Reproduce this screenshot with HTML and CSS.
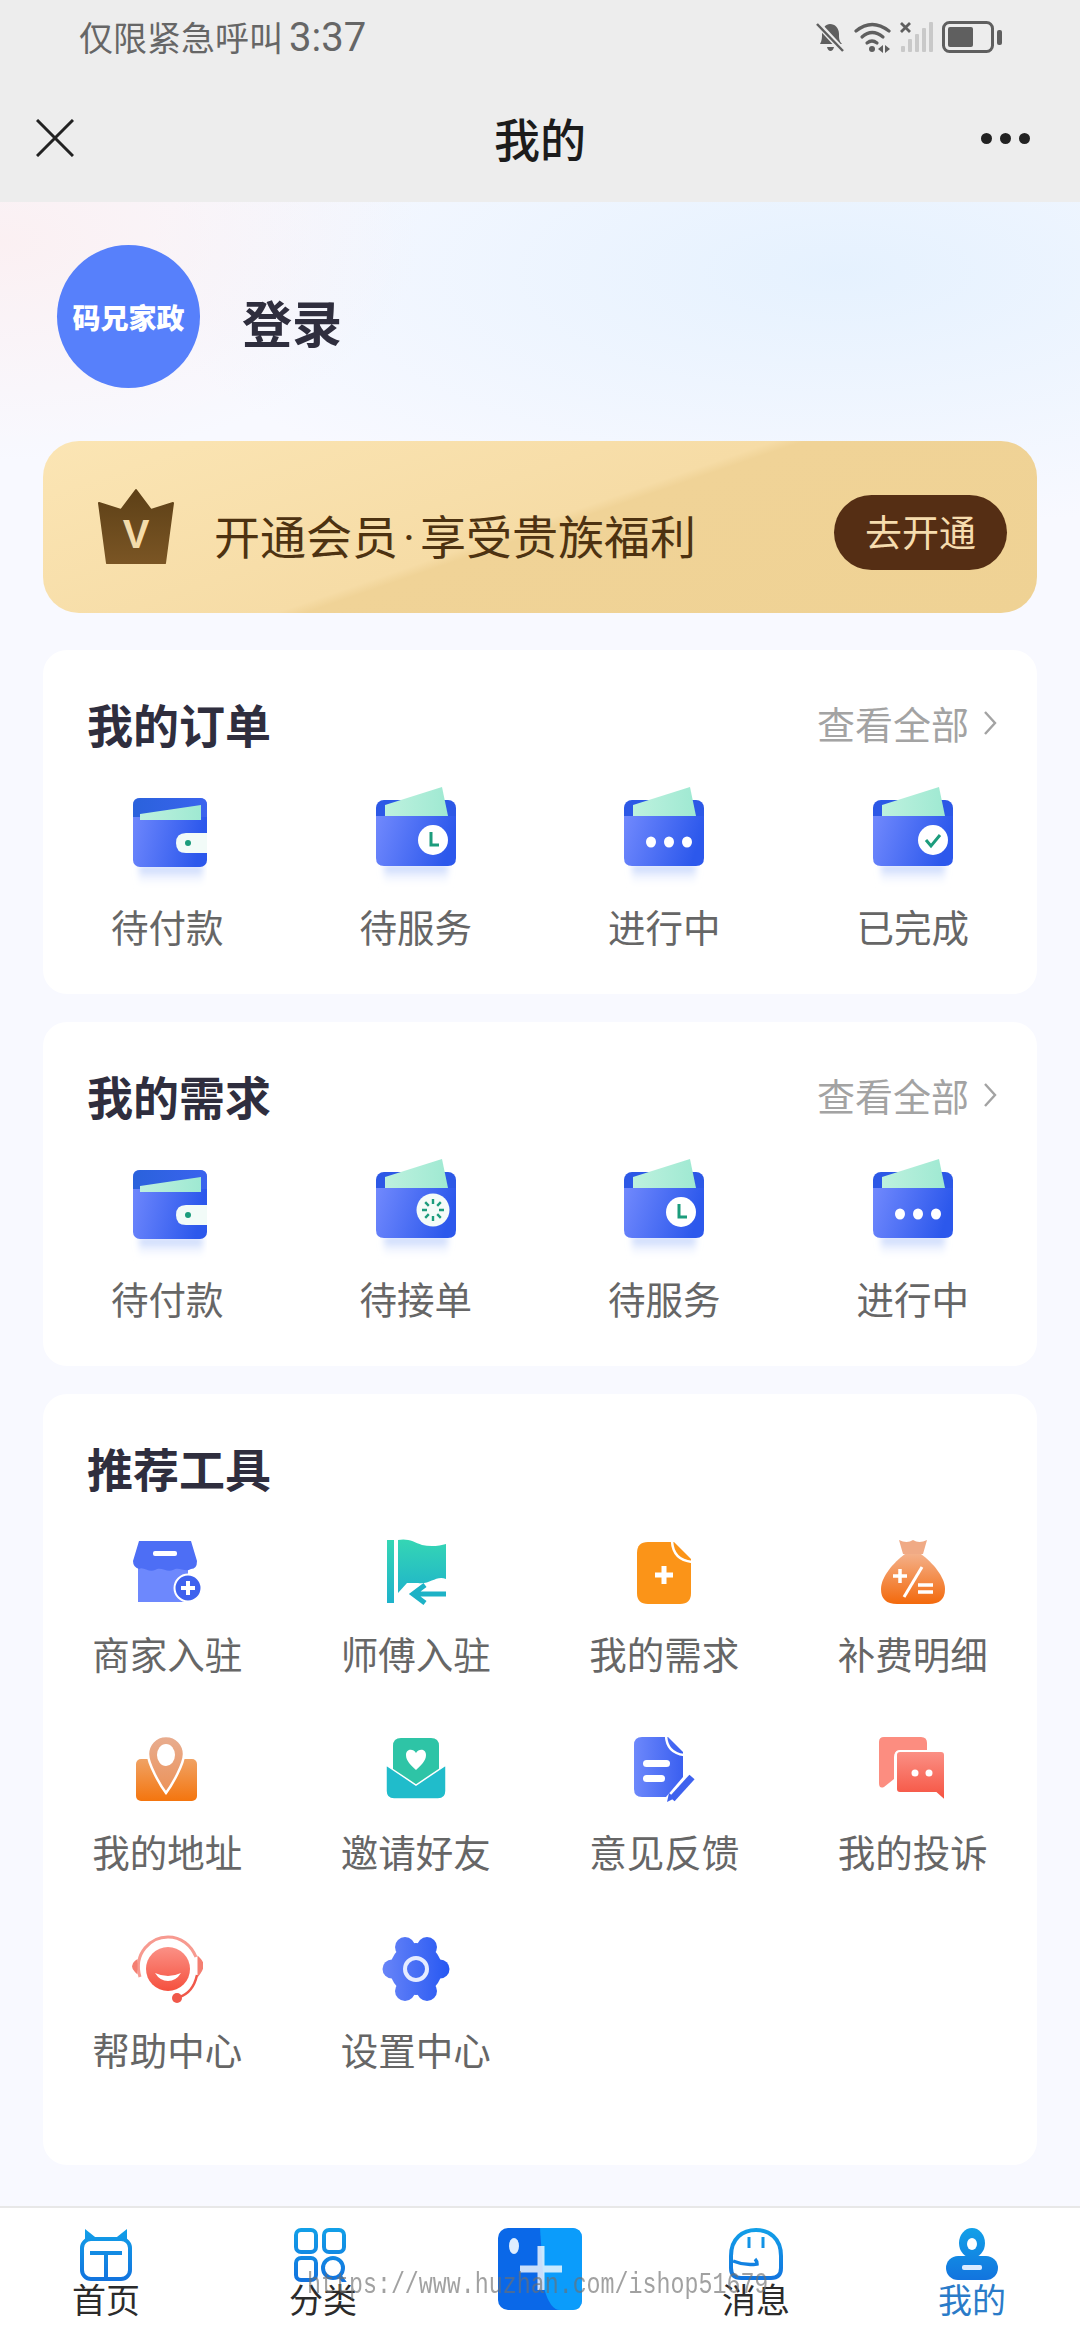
FILE: index.html
```html
<!DOCTYPE html>
<html lang="zh">
<head>
    <meta charset="utf-8">
    <title>我的</title>
    <link rel="stylesheet" href="styles.css">
</head>
<body>
    <!-- shared gradients and icons -->
    <svg class="sprite" xmlns="http://www.w3.org/2000/svg">
        <defs>
            <filter id="soft" x="-20%" y="-20%" width="140%" height="140%"><feGaussianBlur stdDeviation="3"/></filter>
            <linearGradient id="walletBody" x1="0" y1="0" x2="1" y2="0.2"><stop offset="0" stop-color="#7189fd"/><stop offset="1" stop-color="#2c58ec"/></linearGradient>
            <linearGradient id="walletTop" x1="0" y1="0" x2="1" y2="0"><stop offset="0" stop-color="#2a62dc"/><stop offset="1" stop-color="#3a63ee"/></linearGradient>
            <linearGradient id="mint" x1="0" y1="0" x2="1" y2="0"><stop offset="0" stop-color="#bdf1de"/><stop offset="1" stop-color="#9fe9d2"/></linearGradient>
            <linearGradient id="fade" x1="0" y1="0" x2="0" y2="1"><stop offset="0" stop-color="#b9cdfb"/><stop offset="1" stop-color="#ffffff" stop-opacity="0"/></linearGradient>
            <linearGradient id="blueSide" x1="0" y1="0" x2="1" y2="0"><stop offset="0" stop-color="#6d88fb"/><stop offset="1" stop-color="#3a5ff0"/></linearGradient>
            <linearGradient id="gearBlue" gradientUnits="userSpaceOnUse" x1="0" y1="0" x2="72" y2="0"><stop offset="0" stop-color="#6a86f8"/><stop offset="1" stop-color="#2456f2"/></linearGradient>
            <linearGradient id="teal" x1="0" y1="0" x2="0" y2="1"><stop offset="0" stop-color="#35d6b4"/><stop offset="1" stop-color="#1eb2cb"/></linearGradient>
            <linearGradient id="orange" x1="0" y1="0" x2="0" y2="1"><stop offset="0" stop-color="#f4b089"/><stop offset="1" stop-color="#f3690c"/></linearGradient>
            <linearGradient id="orangeBody" x1="0" y1="0" x2="0" y2="1"><stop offset="0" stop-color="#f0a264"/><stop offset="1" stop-color="#f4750e"/></linearGradient>
            <linearGradient id="peach" x1="0" y1="0" x2="0" y2="1"><stop offset="0" stop-color="#e8ad90"/><stop offset="1" stop-color="#ec9258"/></linearGradient>
            <linearGradient id="salmon" x1="0" y1="0" x2="0" y2="1"><stop offset="0" stop-color="#fb9186"/><stop offset="1" stop-color="#f5503e"/></linearGradient>
            <linearGradient id="navBlue" gradientUnits="userSpaceOnUse" x1="0" y1="0" x2="0" y2="54"><stop offset="0" stop-color="#12a0e8"/><stop offset="1" stop-color="#1272de"/></linearGradient>
            <linearGradient id="crown" x1="0" y1="0" x2="0" y2="1"><stop offset="0" stop-color="#5d4017"/><stop offset="1" stop-color="#7a5524"/></linearGradient>

            <symbol id="w-base" viewBox="0 0 80 105">
                <rect x="8" y="78" width="64" height="22" fill="url(#fade)" filter="url(#soft)"/>
                <rect x="0" y="13" width="80" height="60" rx="8" fill="#2c58e6"/>
                <path d="M9 18 L66 0 L72 29 L9 29 Z" fill="url(#mint)"/>
                <path d="M0 29 H80 V71 Q80 79 72 79 H8 Q0 79 0 71 Z" fill="url(#walletBody)"/>
            </symbol>
            <symbol id="w-flap" viewBox="-3 0 80 105">
                <rect x="9" y="79" width="64" height="22" fill="url(#fade)" filter="url(#soft)"/>
                <rect x="3" y="11" width="74" height="69" rx="7" fill="url(#walletBody)"/>
                <path d="M3 18 Q3 11 10 11 H70 Q77 11 77 18 V30 H3 Z" fill="url(#walletTop)"/>
                <path d="M10 27 L71 18 V33 H10 Z" fill="url(#mint)"/>
                <path d="M56 46 H77 V66 H56 Q46 66 46 56 Q46 46 56 46 Z" fill="#f2fbf8"/>
                <circle cx="58" cy="56" r="3" fill="#1c9c7c"/>
            </symbol>
            <symbol id="w-clock" viewBox="0 0 80 105">
                <use href="#w-base" width="80" height="105"/>
                <circle cx="57" cy="53" r="15" fill="#fff"/>
                <path d="M55 45 V58 H63" fill="none" stroke="#1c9c7c" stroke-width="3"/>
            </symbol>
            <symbol id="w-dots" viewBox="0 0 80 105">
                <use href="#w-base" width="80" height="105"/>
                <ellipse cx="27" cy="55" rx="5" ry="5.5" fill="#fff"/>
                <ellipse cx="45" cy="55" rx="5" ry="5.5" fill="#fff"/>
                <ellipse cx="63" cy="55" rx="5" ry="5.5" fill="#fff"/>
            </symbol>
            <symbol id="w-check" viewBox="0 0 80 105">
                <use href="#w-base" width="80" height="105"/>
                <circle cx="60" cy="53" r="15" fill="#fff"/>
                <path d="M53 53 L58 59 L67 48" fill="none" stroke="#1c9c7c" stroke-width="3"/>
            </symbol>
            <symbol id="w-spin" viewBox="0 0 80 105">
                <use href="#w-base" width="80" height="105"/>
                <circle cx="57" cy="51" r="16.5" fill="#f4fbf8"/>
                <path d="M57 40 V45 M57 57 V62 M46 51 H51 M63 51 H68 M49.2 43.2 L52.8 46.8 M61.2 55.2 L64.8 58.8 M64.8 43.2 L61.2 46.8 M52.8 55.2 L49.2 58.8" stroke="#1c9c7c" stroke-width="2.4"/>
            </symbol>
        </defs>
    </svg>

    <div class="phone">
        <header class="topbar">
            <div class="statusbar">
                <span class="status-text">仅限紧急呼叫<span class="status-time">3:37</span></span>
                <div class="status-icons">
                    <svg width="30" height="32" viewBox="0 0 30 32"><path d="M5 23 C7 20 7 16 7 13 C7 7 11 3 15 3 C20 3 24 7 24 13 C24 17 24 20 27 23 Z" fill="#5f5f5f"/><path d="M12 26 H19 Q18 30 15.5 30 Q13 30 12 26 Z" fill="#5f5f5f"/><path d="M3 3 L28 30" stroke="#ededed" stroke-width="6"/><path d="M2 3 L28 30" stroke="#5f5f5f" stroke-width="2.5"/></svg>
                    <svg width="37" height="32" viewBox="0 0 37 32"><g fill="none" stroke="#5f5f5f" stroke-width="3.2" stroke-linecap="round"><path d="M2 10 Q18 -3 35 10"/><path d="M8 16 Q18 7 29 16"/><path d="M13 22 Q18 18 23 22"/></g><circle cx="18" cy="28" r="3" fill="#5f5f5f"/><path d="M29 24 V32 L24 28 Z M31 24 V32 L36 28 Z" fill="#5f5f5f"/></svg>
                    <svg width="33" height="32" viewBox="0 0 33 32"><path d="M1 2 L10 11 M10 2 L1 11" stroke="#5f5f5f" stroke-width="2.8"/><g fill="#c9c9c9"><rect x="1" y="25" width="4" height="6" rx="1"/><rect x="8" y="18" width="4" height="13" rx="1"/><rect x="15" y="13" width="4" height="18" rx="1"/><rect x="22" y="7" width="4" height="24" rx="1"/><rect x="29" y="1" width="4" height="30" rx="1"/></g></svg>
                    <svg width="60" height="32" viewBox="0 0 60 32"><rect x="1.5" y="1.5" width="49" height="29" rx="6" fill="none" stroke="#5f5f5f" stroke-width="3"/><rect x="6" y="6" width="25" height="20" rx="2" fill="#5f5f5f"/><rect x="55" y="9" width="5" height="15" rx="2" fill="#5f5f5f"/></svg>
                </div>
            </div>
            <div class="navbar">
                <svg class="nav-close" width="38" height="38" viewBox="0 0 38 38"><path d="M1 1 L37 37 M37 1 L1 37" stroke="#222" stroke-width="3"/></svg>
                <h1 class="nav-title">我的</h1>
                <div class="nav-more"><i></i><i></i><i></i></div>
            </div>
        </header>

        <main class="content">
            <section class="profile">
                <div class="avatar">码兄家政</div>
                <div class="login">登录</div>
            </section>

            <section class="vip">
                <svg class="vip-crown" width="78" height="78" viewBox="0 0 78 78">
                    <path d="M39 2 L54 22 L76 15 L68 75 H10 L2 15 L24 22 Z" fill="url(#crown)" stroke="url(#crown)" stroke-width="2" stroke-linejoin="round"/>
                    <text x="39" y="60" text-anchor="middle" class="vip-v">V</text>
                </svg>
                <div class="vip-text">开通会员<span class="vip-dot">·</span>享受贵族福利</div>
                <div class="vip-btn">去开通</div>
            </section>

            <section class="card">
                <div class="card-head">
                    <h2 class="card-title">我的订单</h2>
                    <div class="card-more">查看全部<svg width="14" height="26" viewBox="0 0 14 26"><path d="M2 2 L12 13 L2 24" fill="none" stroke="#a3a3a3" stroke-width="2.4"/></svg></div>
                </div>
                <div class="grid-row">
                    <div class="cell"><svg class="wallet"><use href="#w-flap"/></svg><span class="cell-label">待付款</span></div>
                    <div class="cell"><svg class="wallet"><use href="#w-clock"/></svg><span class="cell-label">待服务</span></div>
                    <div class="cell"><svg class="wallet"><use href="#w-dots"/></svg><span class="cell-label">进行中</span></div>
                    <div class="cell"><svg class="wallet"><use href="#w-check"/></svg><span class="cell-label">已完成</span></div>
                </div>
            </section>

            <section class="card">
                <div class="card-head">
                    <h2 class="card-title">我的需求</h2>
                    <div class="card-more">查看全部<svg width="14" height="26" viewBox="0 0 14 26"><path d="M2 2 L12 13 L2 24" fill="none" stroke="#a3a3a3" stroke-width="2.4"/></svg></div>
                </div>
                <div class="grid-row">
                    <div class="cell"><svg class="wallet"><use href="#w-flap"/></svg><span class="cell-label">待付款</span></div>
                    <div class="cell"><svg class="wallet"><use href="#w-spin"/></svg><span class="cell-label">待接单</span></div>
                    <div class="cell"><svg class="wallet"><use href="#w-clock"/></svg><span class="cell-label">待服务</span></div>
                    <div class="cell"><svg class="wallet"><use href="#w-dots"/></svg><span class="cell-label">进行中</span></div>
                </div>
            </section>

            <section class="card card-tools">
                <div class="card-head">
                    <h2 class="card-title">推荐工具</h2>
                </div>
                <div class="grid-row tools">
                    <div class="cell tool">
                        <svg width="72" height="72" viewBox="0 0 72 72">
                            <rect x="7" y="28" width="50" height="37" fill="#6d88fd"/>
                            <path d="M8 4 H60 L66 24 Q66 32 60 32 C54 36 48 29 42 33 C36 36 30 29 24 33 C18 36 12 29 8 32 Q2 30 2 24 Z" fill="#4d6ef5"/>
                            <rect x="22" y="14" width="24" height="5" rx="2" fill="#fff"/>
                            <circle cx="57" cy="51" r="13.5" fill="#3f62ee" stroke="#fff" stroke-width="2"/>
                            <path d="M57 44 V58 M50 51 H64" stroke="#fff" stroke-width="4"/>
                        </svg>
                        <span class="cell-label">商家入驻</span>
                    </div>
                    <div class="cell tool">
                        <svg width="72" height="72" viewBox="0 0 72 72">
                            <rect x="7" y="3" width="7" height="63" fill="url(#teal)"/>
                            <path d="M18 3 C28 1 34 5 42 8 C50 10 60 9 66 7 V42 C56 38 50 48 38 46 L27 46 L18 56 V60 Z" fill="url(#teal)"/>
                            <path d="M66 57 H36 M45 48 L33 57 L45 66" fill="none" stroke="#1db2c6" stroke-width="5"/>
                        </svg>
                        <span class="cell-label">师傅入驻</span>
                    </div>
                    <div class="cell tool">
                        <svg width="72" height="72" viewBox="0 0 72 72">
                            <path d="M20 5 H46 L63 22 V56 Q63 67 52 67 H20 Q9 67 9 56 V16 Q9 5 20 5 Z" fill="#fb9418"/>
                            <path d="M44 4 Q45 23 64 25" fill="none" stroke="#fff" stroke-width="2.5"/>
                            <path d="M36 29 V47 M27 38 H45" stroke="#fff" stroke-width="5"/>
                        </svg>
                        <span class="cell-label">我的需求</span>
                    </div>
                    <div class="cell tool">
                        <svg width="72" height="72" viewBox="0 0 72 72">
                            <path d="M22 3 Q30 7 36 3 Q42 7 50 3 L46 17 H26 Z" fill="#f0aa85"/>
                            <path d="M28 17 H44 C56 26 68 40 68 52 Q68 67 52 67 H20 Q4 67 4 52 C4 40 16 26 28 17 Z" fill="url(#orange)"/>
                            <path d="M45 30 L27 60" stroke="#fff" stroke-width="3"/>
                            <path d="M23 32 V46 M16 39 H30 M41 48 H56 M41 55 H56" stroke="#fff" stroke-width="3.5"/>
                        </svg>
                        <span class="cell-label">补费明细</span>
                    </div>
                    <div class="cell tool">
                        <svg width="72" height="72" viewBox="0 0 72 72">
                            <rect x="5" y="24" width="61" height="42" rx="5" fill="url(#orangeBody)"/>
                            <path d="M35 1 C46 1 53 10 53 19 C53 29 41 50 35 58 C29 50 17 29 17 19 C17 10 24 1 35 1 Z" fill="url(#peach)" stroke="#fff" stroke-width="2.5"/>
                            <ellipse cx="35" cy="20" rx="9" ry="11" fill="#fff"/>
                        </svg>
                        <span class="cell-label">我的地址</span>
                    </div>
                    <div class="cell tool">
                        <svg width="72" height="72" viewBox="0 0 72 72">
                            <path d="M21 3 H51 Q59 3 59 11 V36 L36 52 L13 36 V11 Q13 3 21 3 Z" fill="#2ec4a6"/>
                            <path d="M36 35 C31 30 26 26 26 20 C26 14 33 13 36 18 C39 13 46 14 46 20 C46 26 41 30 36 35 Z" fill="#fff"/>
                            <path d="M6 30 L36 50 L66 30 V56 Q66 64 58 64 H14 Q6 64 6 56 Z" fill="#20bccb" stroke="#fff" stroke-width="1.5"/>
                        </svg>
                        <span class="cell-label">邀请好友</span>
                    </div>
                    <div class="cell tool">
                        <svg width="72" height="72" viewBox="0 0 72 72">
                            <path d="M14 2 H40 L55 17 V42 L38 62 H14 Q6 62 6 54 V10 Q6 2 14 2 Z" fill="url(#blueSide)"/>
                            <path d="M38 1 Q39 18 56 20" fill="none" stroke="#fff" stroke-width="2.5"/>
                            <rect x="15" y="25" width="27" height="7" rx="3.5" fill="#fff"/>
                            <rect x="15" y="40" width="22" height="7" rx="3.5" fill="#fff"/>
                            <path d="M44 64 L64 42" stroke="#3f62ee" stroke-width="7"/>
                            <path d="M39 67 L41 58 L47 63 Z" fill="#3f62ee"/>
                        </svg>
                        <span class="cell-label">意见反馈</span>
                    </div>
                    <div class="cell tool">
                        <svg width="72" height="72" viewBox="0 0 72 72">
                            <path d="M7 2 H44 Q50 2 50 8 V16 H22 Q17 16 17 22 V44 L7 52 Q2 54 2 48 V7 Q2 2 7 2 Z" fill="#fc8d80"/>
                            <path d="M23 16 H64 Q68 16 68 20 V66 L59 58 H23 Q19 58 19 54 V20 Q19 16 23 16 Z" fill="url(#salmon)" stroke="#fff" stroke-width="2"/>
                            <circle cx="38" cy="38" r="3.5" fill="#fff"/>
                            <circle cx="52" cy="38" r="3.5" fill="#fff"/>
                        </svg>
                        <span class="cell-label">我的投诉</span>
                    </div>
                    <div class="cell tool">
                        <svg width="72" height="72" viewBox="0 0 72 72">
                            <circle cx="37" cy="36" r="22" fill="url(#salmon)"/>
                            <path d="M9 44 C2 20 20 4 37 4 C50 4 60 12 65 24" fill="none" stroke="#f79a90" stroke-width="3"/>
                            <path d="M24 40 Q37 46 50 40 Q45 48 37 48 Q29 48 24 40 Z" fill="#fff"/>
                            <path d="M5 29 Q0 33 5 38 Z M68 26 Q74 32 68 40 Z" fill="#f47f72" stroke="#f47f72" stroke-width="3"/>
                            <path d="M66 42 Q62 60 48 64" fill="none" stroke="#f0584a" stroke-width="2.5"/>
                            <circle cx="46" cy="65" r="5" fill="#f0584a"/>
                        </svg>
                        <span class="cell-label">帮助中心</span>
                    </div>
                    <div class="cell tool">
                        <svg width="72" height="72" viewBox="0 0 72 72">
                            <g fill="url(#gearBlue)">
                                <circle cx="36" cy="36" r="26"/>
                                <circle cx="12" cy="36" r="9.5"/><circle cx="60" cy="36" r="9.5"/>
                                <circle cx="25" cy="14" r="10"/><circle cx="47" cy="14" r="10"/>
                                <circle cx="25" cy="58" r="10"/><circle cx="47" cy="58" r="10"/>
                            </g>
                            <circle cx="36" cy="36" r="11" fill="none" stroke="#e6ecff" stroke-width="4"/>
                        </svg>
                        <span class="cell-label">设置中心</span>
                    </div>
                </div>
            </section>
        </main>

        <nav class="tabbar">
            <div class="tab">
                <svg width="54" height="54" viewBox="0 0 54 54" fill="none" stroke="url(#navBlue)" stroke-width="4"><rect x="3" y="11" width="48" height="40" rx="9"/><path d="M7 3 V11 H17 Z M47 3 V11 H37 Z" fill="url(#navBlue)" stroke-width="2"/><path d="M11 25 H43 M27 25 V50"/></svg>
                <span class="tab-label">首页</span>
            </div>
            <div class="tab">
                <svg width="54" height="54" viewBox="0 0 54 54" fill="none" stroke="url(#navBlue)" stroke-width="4"><rect x="3" y="2" width="20" height="22" rx="5"/><rect x="31" y="2" width="20" height="22" rx="5"/><rect x="3" y="30" width="20" height="22" rx="5"/><circle cx="40" cy="40" r="10"/><path d="M46 47 L52 55"/></svg>
                <span class="tab-label tab-shift">分类</span>
            </div>
            <div class="tab">
                <svg width="84" height="82" viewBox="0 0 84 82"><rect width="84" height="82" rx="10" fill="#0a68e8"/><path d="M42 0 H74 Q84 0 84 10 V72 Q84 82 74 82 H62 Q52 82 46 60 Z" fill="#0b9cfb"/><path d="M43 18 V62 M22 41 H64" stroke="#fff" stroke-opacity=".78" stroke-width="7"/><ellipse cx="16" cy="18" rx="5" ry="8" fill="#dfeeff"/></svg>
            </div>
            <div class="tab">
                <svg width="54" height="54" viewBox="0 0 54 54" fill="none" stroke="url(#navBlue)" stroke-width="4"><path d="M2 28 C2 10 14 2 27 2 C40 2 52 10 52 28 V40 Q52 50 42 50 H12 Q2 50 2 40 Z"/><path d="M20 9 V20 M34 9 V20" stroke-width="3"/><path d="M4 33 Q16 38 28 36 Q28 33 26 31" stroke-width="3.5"/></svg>
                <span class="tab-label">消息</span>
            </div>
            <div class="tab">
                <svg width="54" height="54" viewBox="0 0 54 54"><ellipse cx="27" cy="15" rx="13" ry="15" fill="url(#navBlue)"/><ellipse cx="27" cy="16" rx="5" ry="6" fill="#fff"/><rect x="1" y="28" width="52" height="24" rx="12" fill="url(#navBlue)"/><rect x="17" y="37" width="20" height="5" rx="2" fill="#dbeaff"/></svg>
                <span class="tab-label tab-active">我的</span>
            </div>
            <div class="watermark">https://www.huzhan.com/ishop51679</div>
        </nav>
    </div>
</body>
</html>
```

FILE: styles.css
```css
* {
    box-sizing: border-box;
}
body {
    margin: 0;
    padding: 0;
    font-family: "Noto Sans CJK SC", "Noto Sans", sans-serif;
    background: #f8f9ff;
}
h1, h2 {
    margin: 0;
    font-weight: inherit;
}

.sprite {
    display: block;
    width: 0;
    height: 0;
}
.phone {
    width: 1080px;
    height: 2340px;
    display: flex;
    flex-direction: column;
    overflow: hidden;
}

/* top grey area */
.topbar {
    background: #ededed;
    height: 202px;
    flex: none;
}
.statusbar {
    height: 74px;
    padding: 0 78px 0 79px;
    display: flex;
    align-items: center;
    justify-content: space-between;
}
.status-text {
    font-size: 34px;
    line-height: 74px;
    color: #666;
    white-space: nowrap;
}
.status-time {
    font-family: Roboto, sans-serif;
    font-size: 40px;
    margin-left: 6px;
}
.status-icons {
    display: flex;
    gap: 9px;
}
.navbar {
    height: 128px;
    padding: 0 36px;
    display: grid;
    grid-template-columns: 1fr auto 1fr;
    align-items: center;
}
.nav-title {
    font-size: 46px;
    font-weight: 500;
    color: #1c1c1c;
    line-height: 60px;
    margin-top: -2px;
}
.nav-more {
    justify-self: end;
    display: flex;
    gap: 8px;
    margin-right: 14px;
}
.nav-more i {
    display: block;
    width: 11px;
    height: 11px;
    border-radius: 50%;
    background: #222;
}

/* page body */
.content {
    flex: 1;
    padding: 43px 43px 0;
    background:
        radial-gradient(420px 220px at 0 40px, rgba(253, 234, 234, .6), rgba(253, 234, 234, 0)),
        radial-gradient(700px 260px at 840px 70px, rgba(226, 240, 254, .85), rgba(226, 240, 254, 0)),
        #f8f9ff;
}
.profile {
    display: flex;
    align-items: center;
    gap: 42px;
    padding-left: 14px;
    margin-bottom: 53px;
}
.avatar {
    width: 143px;
    height: 143px;
    border-radius: 50%;
    background: #5780fb;
    color: #fff;
    font-size: 28px;
    font-weight: 900;
    display: flex;
    align-items: center;
    justify-content: center;
    white-space: nowrap;
}
.login {
    font-size: 50px;
    font-weight: 700;
    color: #2f2e3e;
    line-height: 60px;
    margin-top: 8px;
}

.vip {
    height: 172px;
    border-radius: 36px;
    margin-bottom: 37px;
    padding: 0 30px 0 54px;
    display: flex;
    align-items: center;
    background: linear-gradient(161deg, #fbe5b4 0%, #f6dca6 49%, #f0d397 51%, #efd294 100%);
}
.vip-crown {
    flex: none;
}
.vip-v {
    font-family: "Liberation Sans", sans-serif;
    font-size: 40px;
    font-weight: 700;
    fill: #f3dcab;
}
.vip-text {
    flex: 1;
    margin-left: 39px;
    margin-top: 18px;
    font-size: 46px;
    line-height: 60px;
    color: #4d3211;
    white-space: nowrap;
}
.vip-dot {
    font-family: Roboto, sans-serif;
    margin: 0 5px;
}
.vip-btn {
    width: 173px;
    height: 75px;
    border-radius: 38px;
    background: #552e14;
    color: #f6dcae;
    font-size: 37px;
    line-height: 72px;
    text-align: center;
    margin-top: 10px;
}

.card {
    background: #fff;
    border-radius: 24px;
    margin-bottom: 28px;
    padding: 43px 0 43px;
}
.card-tools {
    padding-bottom: 91px;
}
.card-head {
    height: 60px;
    padding: 0 40px 0 44px;
    display: flex;
    align-items: center;
    justify-content: space-between;
    margin-bottom: 34px;
}
.card-tools .card-head {
    margin-bottom: 40px;
}
.card-title {
    font-size: 46px;
    font-weight: 700;
    color: #2f2e3e;
    line-height: 60px;
}
.card-more {
    display: flex;
    align-items: center;
    gap: 14px;
    font-size: 38px;
    line-height: 60px;
    color: #a3a3a3;
}
.grid-row {
    display: grid;
    grid-template-columns: repeat(4, 1fr);
}
.tools {
    row-gap: 57px;
}
.cell {
    display: flex;
    flex-direction: column;
    align-items: center;
    gap: 9px;
}
.tool {
    gap: 19px;
}
.wallet {
    width: 80px;
    height: 105px;
    display: block;
}
.cell-label {
    font-size: 37.5px;
    line-height: 50px;
    color: #666;
    white-space: nowrap;
}

/* bottom tabs */
.tabbar {
    position: relative;
    flex: none;
    height: 134px;
    background: #fff;
    border-top: 2px solid #e8e8e8;
    padding-top: 20px;
    display: grid;
    grid-template-columns: 212px 216px 224px 208px 224px;
}
.tab {
    display: flex;
    flex-direction: column;
    align-items: center;
}
.tab-label {
    font-size: 34px;
    line-height: 40px;
    margin-top: -3px;
    color: #2b2b2b;
}
.tab-shift {
    margin-left: 6px;
}
.tab-active {
    color: #2a7bc8;
}
.watermark {
    position: absolute;
    left: 307px;
    top: 62px;
    font-family: "Liberation Mono", monospace;
    font-size: 23.3px;
    line-height: 30px;
    color: rgba(110, 110, 110, .65);
    white-space: nowrap;
    transform: scaleY(1.3);
}
```
